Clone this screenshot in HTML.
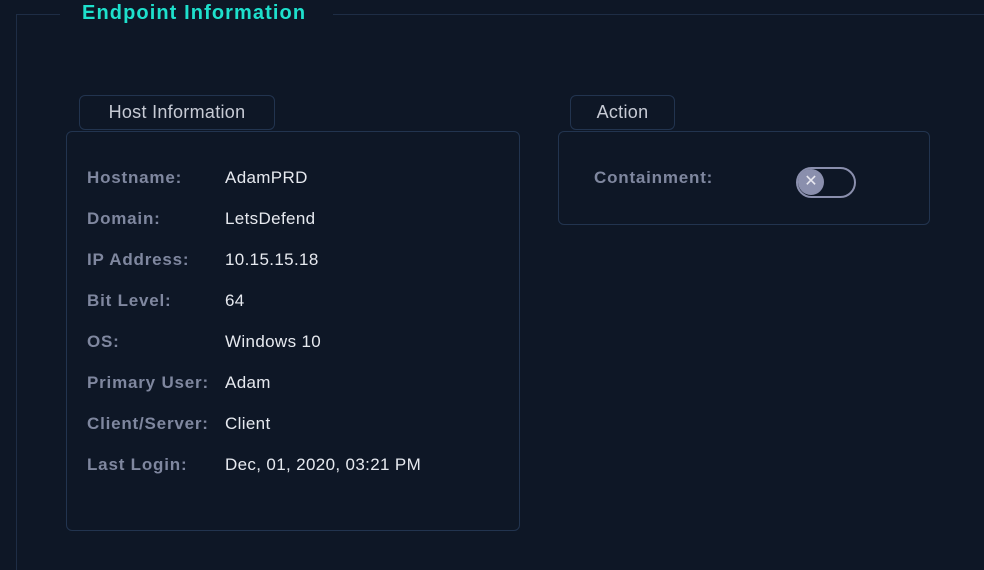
<!DOCTYPE html>
<html><head><style>
*{margin:0;padding:0;box-sizing:border-box}
body{width:984px;height:570px;background:#0e1726;position:relative;overflow:hidden;font-family:"Liberation Sans",sans-serif}
.a{position:absolute}
.line{background:#1e2d45}
.title{left:82px;top:2px;font-size:20px;font-weight:bold;color:#1ee0cc;letter-spacing:1.1px}
.tab{border:1px solid #22344f;border-radius:6px;color:#c7cbd5;font-size:18px;text-align:center;line-height:33px;background:#0e1726;letter-spacing:0.3px}
.panel{border:1px solid #22344f;border-radius:6px}
.lbl{color:#7f879f;font-weight:bold;font-size:17px;letter-spacing:0.8px}
.val{color:#e6e9ef;font-size:17px;letter-spacing:0.35px}
</style></head><body>
<div class="a line" style="left:16px;top:14px;width:1px;height:556px"></div>
<div class="a line" style="left:16px;top:14px;width:44px;height:1px"></div>
<div class="a line" style="left:333px;top:14px;width:651px;height:1px"></div>
<div class="a title">Endpoint Information</div>

<div class="a panel" style="left:66px;top:131px;width:454px;height:400px"></div>
<div class="a tab" style="left:79px;top:95px;width:196px;height:35px">Host Information</div>

<div class="a panel" style="left:558px;top:131px;width:372px;height:94px"></div>
<div class="a tab" style="left:570px;top:95px;width:105px;height:35px">Action</div>
<div class="a lbl" style="left:594px;top:168px">Containment:</div>
<div class="a" style="left:796px;top:167px;width:60px;height:31px;border:2px solid #8a8fad;border-radius:16px"></div>
<div class="a" style="left:798px;top:169px;width:26px;height:26px;border-radius:50%;background:#8a8fad;color:#e8e8f0;font-size:16px;line-height:26px;text-align:center">✕</div>

<div class="a lbl" style="left:87px;top:168px">Hostname:</div><div class="a val" style="left:225px;top:168px">AdamPRD</div>
<div class="a lbl" style="left:87px;top:209px">Domain:</div><div class="a val" style="left:225px;top:209px">LetsDefend</div>
<div class="a lbl" style="left:87px;top:250px">IP Address:</div><div class="a val" style="left:225px;top:250px">10.15.15.18</div>
<div class="a lbl" style="left:87px;top:291px">Bit Level:</div><div class="a val" style="left:225px;top:291px">64</div>
<div class="a lbl" style="left:87px;top:332px">OS:</div><div class="a val" style="left:225px;top:332px">Windows 10</div>
<div class="a lbl" style="left:87px;top:373px">Primary User:</div><div class="a val" style="left:225px;top:373px">Adam</div>
<div class="a lbl" style="left:87px;top:414px">Client/Server:</div><div class="a val" style="left:225px;top:414px">Client</div>
<div class="a lbl" style="left:87px;top:455px">Last Login:</div><div class="a val" style="left:225px;top:455px">Dec, 01, 2020, 03:21 PM</div>
</body></html>
